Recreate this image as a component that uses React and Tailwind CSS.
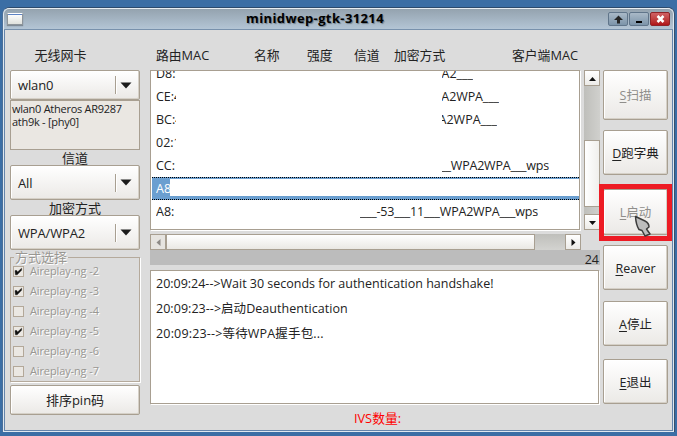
import React from "react";

const raised =
  "rounded-[2px] border border-[#a89f91] bg-gradient-to-b from-white to-[#ebe9e6] shadow-[inset_-1px_-1px_0_#d5d0c7,inset_1px_1px_0_#ffffff]";

function Combo({ value, className }) {
  return (
    <div className={`flex shrink-0 items-center ${raised} ${className}`}>
      <span className="ml-[7px] w-[97px] text-[13px] leading-4 tracking-[-0.15px]">{value}</span>
      <span className="h-[18px] w-[2px] border-l border-[#a89f91] bg-white" />
      <svg className="ml-[3px]" width="12" height="7" viewBox="0 0 12 7">
        <path d="M.5 .5h11L6 6.5z" fill="#1c1c1c" />
      </svg>
    </div>
  );
}

function Check({ label, on }) {
  return (
    <div className="flex h-5 items-center">
      <span className="flex h-[11px] w-[11px] items-center justify-center border border-[#b3a899] bg-[#ebe8e3]">
        {on && (
          <svg width="9" height="9" viewBox="0 0 9 9">
            <path d="M1 3.6h1.8L3.6 5 7.6 1.2v2L3.2 7.8H1.4z" fill="#111" stroke="#111" strokeWidth=".4" />
          </svg>
        )}
      </span>
      <span className="ml-[6px] whitespace-pre text-[11px] leading-4 tracking-[-0.12px] text-[#999792] [text-shadow:1px_1px_0_#fff]">
        {label}
      </span>
    </div>
  );
}

function Row({ mac, tail, tailClass }) {
  return (
    <div className="flex h-[23px] shrink-0 items-center whitespace-pre pl-[5px]">
      <span className="w-[20px] shrink-0 overflow-hidden">{mac}</span>
      {tail && <span className={`flex shrink-0 justify-end overflow-hidden ${tailClass}`}>{tail}</span>}
    </div>
  );
}

function Action({ k, label, className, disabled }) {
  return (
    <button
      className={`flex w-[65px] shrink-0 items-center justify-center whitespace-nowrap pt-[2px] text-[12.5px] leading-4 ${raised} ${disabled ? "text-[#8f8e8b]" : ""} ${className}`}
    >
      <span>
        <span className="underline decoration-1 underline-offset-2">{k}</span>
        {label}
      </span>
    </button>
  );
}

function Arrow({ dir, dim }) {
  const paths = {
    up: "M0 6h7L3.5 2z",
    down: "M0 2h7L3.5 6z",
    left: "M5.5 0v7L1.5 3.5z",
    right: "M1.5 0v7L5.5 3.5z",
  };
  return (
    <span className={`flex h-4 w-4 shrink-0 items-center justify-center border border-[#a89f91] ${dim ? "bg-[#e6e4e0]" : "bg-gradient-to-b from-white to-[#ecebe8]"}`}>
      <svg width="7" height="7" viewBox="0 0 7 7">
        <path d={paths[dir]} fill={dim ? "#8d8a86" : "#111"} />
      </svg>
    </span>
  );
}

function TitleBar() {
  return (
    <header className="relative flex h-[22px] shrink-0 items-center justify-center rounded-t-[5px] border-b border-[#7891ac] bg-gradient-to-b from-[#93a1ad] to-[#b3c5d5] shadow-[inset_0_1px_0_#e7edf2]">
      <span className="absolute left-[3px] top-[5px] h-[12px] w-[16px] border border-[#8d949a] border-t-white bg-gradient-to-b from-white to-[#dfe1dc] shadow-[0_1px_1px_#7f8b95]">
        <span className="block h-[1px] bg-[#5d83c4]" />
      </span>
      <h1 className="mb-[2px] mr-[47px] text-[13px] font-bold leading-4 tracking-[0.38px] text-black [text-shadow:1px_1px_1px_#6d7c89]">
        minidwep-gtk-31214
      </h1>
      <div className="absolute right-[3px] top-[4px] flex gap-[1px]">
        <span className="flex h-[14px] w-5 items-center justify-center rounded-[2px] border border-[#60758a] bg-gradient-to-b from-[#a9b9c7] to-[#7c94a9]">
          <svg width="9" height="9" viewBox="0 0 9 9"><path d="M4.5.5L9 5H6v3.5H3V5H0z" fill="#252525" /></svg>
        </span>
        <span className="flex h-[14px] w-5 items-center justify-center rounded-[2px] border border-[#60758a] bg-gradient-to-b from-[#a9b9c7] to-[#7c94a9]">
          <span className="mt-[6px] h-[2px] w-[6px] bg-black" />
        </span>
        <span className="flex h-[14px] w-5 items-center justify-center rounded-[2px] border border-[#8e2429] bg-gradient-to-b from-[#cf6064] to-[#b01219]">
          <svg width="9" height="8" viewBox="0 0 9 8"><path d="M1.5 1l6 6M7.5 1l-6 6" stroke="#fff" strokeWidth="2.5" /></svg>
        </span>
      </div>
    </header>
  );
}

export default function App() {
  return (
    <div className="h-[436px] w-[677px] overflow-hidden bg-[#3b6ea5] pl-[3px] pt-[7px] font-['Open_Sans','Noto_Sans_CJK_SC',sans-serif] text-[12.5px] leading-4 text-[#222]">
      <div className="flex h-[425px] w-[671px] flex-col rounded-t-[7px] border border-[#dfe8f0] border-t-[#2c4a6c] bg-[#dcdcdc] shadow-[1px_0_0_#38506c,-1px_0_0_#4a6f99]">
        <TitleBar />
        <div className="flex h-[401px] border border-t-0 border-[#6484ab] pl-[5px]">
          <aside className="flex w-[130px] shrink-0 flex-col">
            <div className="mt-[17px] h-[23px] pr-[29px] text-center text-[13px]">无线网卡</div>
            <Combo value="wlan0" className="h-[30px]" />
            <div className="h-[50px] whitespace-nowrap border border-[#a89f91] bg-[#eae7e2] pl-[1px] pt-px text-[11px] leading-[13px] tracking-[-0.27px]">
              wlan0 Atheros AR9287
              <br />
              ath9k - [phy0]
            </div>
            <div className="flex h-[15px] items-center justify-center text-[13px]">信道</div>
            <Combo value="All" className="h-[35px]" />
            <div className="mt-[1px] flex h-[14px] items-center justify-center text-[13px]">加密方式</div>
            <Combo value="WPA/WPA2" className="h-[35px]" />
            <fieldset className="h-[132px] border border-[#b5aa9c] pl-[2px] shadow-[1px_1px_0_#fff]">
              <legend className="ml-[1px] h-[14px] px-[1px] text-[13px] leading-[14px] text-[#999792] [text-shadow:1px_1px_0_#fff]">
                方式选择
              </legend>
              <div className="-mt-[3px]">
                <Check label="Aireplay-ng -2" on />
                <Check label="Aireplay-ng -3" on />
                <Check label="Aireplay-ng -4" />
                <Check label="Aireplay-ng -5" on />
                <Check label="Aireplay-ng -6" />
                <Check label="Aireplay-ng -7" />
              </div>
            </fieldset>
            <button className={`mt-[3px] h-[30px] text-[13px] ${raised}`}>排序pin码</button>
          </aside>

          <main className="ml-[10px] flex w-[450px] shrink-0 flex-col">
            <div className="mt-[17px] flex h-[23px] whitespace-nowrap pl-[6px] text-[12.8px]">
              <span className="w-[98px]">路由MAC</span>
              <span className="w-[53px]">名称</span>
              <span className="w-[47px]">强度</span>
              <span className="w-[40px]">信道</span>
              <span className="w-[118px]">加密方式</span>
              <span>客户端MAC</span>
            </div>
            <div className="flex h-[160px] justify-between">
              <div className="flex w-[430px] flex-col overflow-hidden border border-[#a89f91] bg-white shadow-[1px_1px_0_#fff]">
                <div className="-mt-[9px] flex flex-col">
                  <Row mac="D8:" tail="PA2___" tailClass="ml-[266px] w-[31px]" />
                  <Row mac="CE:4" tail="PA2WPA___" tailClass="ml-[266px] w-[57px] tracking-[-0.1px]" />
                  <Row mac="BC:4" tail="PA2WPA___" tailClass="ml-[266px] w-[55px]" />
                  <Row mac="02:1" />
                  <Row mac="CC:" tail="___WPA2WPA___wps" tailClass="ml-[266px] w-[107px] tracking-[-0.2px]" />
                  <div className="ml-[1px] flex h-[23px] border-y border-dotted border-black bg-[#6b9fd0] pb-[3px] pl-[4px] pt-[1px] text-white">
                    <span className="w-[14px] overflow-hidden leading-[19px]">A8</span>
                    <span className="flex-1 bg-white" />
                  </div>
                  <Row mac="A8:" tail="____-53___11___WPA2WPA___wps" tailClass="ml-[184px] w-[178px] tracking-[-0.2px]" />
                </div>
              </div>
              <div className="flex w-4 flex-col bg-gradient-to-r from-[#bfbfbb] to-[#d0d0cd]">
                <Arrow dir="up" />
                <div className="mt-[54px] h-[67px] border border-[#a89f91] bg-gradient-to-r from-white to-[#f0efec]" />
                <div className="mt-auto">
                  <Arrow dir="down" />
                </div>
              </div>
            </div>
            <div className="mt-[4px] flex h-4 w-[431px] bg-gradient-to-b from-[#bfbfbb] to-[#d3d3d0]">
              <Arrow dir="left" dim />
              <div className="w-[369px] border border-[#a89f91] bg-gradient-to-b from-white to-[#eae8e4]" />
              <div className="ml-auto">
                <Arrow dir="right" />
              </div>
            </div>
            <div className="flex h-[15px] items-center justify-end bg-[#bcbcbc] pr-[1px] pt-[4px] text-[12.5px]">24</div>
            <div className="mt-[5px] h-[134px] w-[449px] whitespace-nowrap border border-[#a89f91] bg-white pl-[5px] leading-[25px] shadow-[1px_1px_0_#fff]">
              <p className="tracking-[-0.01px]">20:09:24--&gt;Wait 30 seconds for authentication handshake!</p>
              <p className="tracking-[0.04px]">20:09:23--&gt;启动Deauthentication</p>
              <p className="tracking-[0.17px]">20:09:23--&gt;等待WPA握手包...</p>
            </div>
            <div className="mt-[6px] pl-[5px] text-center text-[12.8px] text-[#f00]">IVS数量:</div>
          </main>

          <nav className="ml-[3px] flex w-[65px] shrink-0 flex-col pt-[40px]">
            <Action k="S" label="扫描" disabled className="h-[50px]" />
            <Action k="D" label="跑字典" className="mt-[10px] h-[45px]" />
            <div className="relative mt-[14px] h-[46px]">
              <Action k="L" label="启动" disabled className="h-[46px]" />
              <div className="absolute -left-[4px] -top-[5px] h-[57px] w-[73px] border-[5px] border-[#ed1b24]" />
              <svg className="absolute left-[31px] top-[26px]" width="20" height="24" viewBox="0 0 20 24">
                <path
                  d="M1.5 1.5L11 6q4 2 4 6l-2.5 2 3.5 5-5 2-3-5.5-3-1Q2 10 1.5 1.5z"
                  fill="#bdbdbd"
                  stroke="#3c3c3c"
                  strokeWidth="1.5"
                  strokeLinejoin="round"
                />
              </svg>
            </div>
            <Action k="R" label="eaver" className="mt-[10px] h-[45px]" />
            <Action k="A" label="停止" className="mt-[11px] h-[45px]" />
            <Action k="E" label="退出" className="mt-[13px] h-[45px]" />
          </nav>
        </div>
      </div>
    </div>
  );
}
